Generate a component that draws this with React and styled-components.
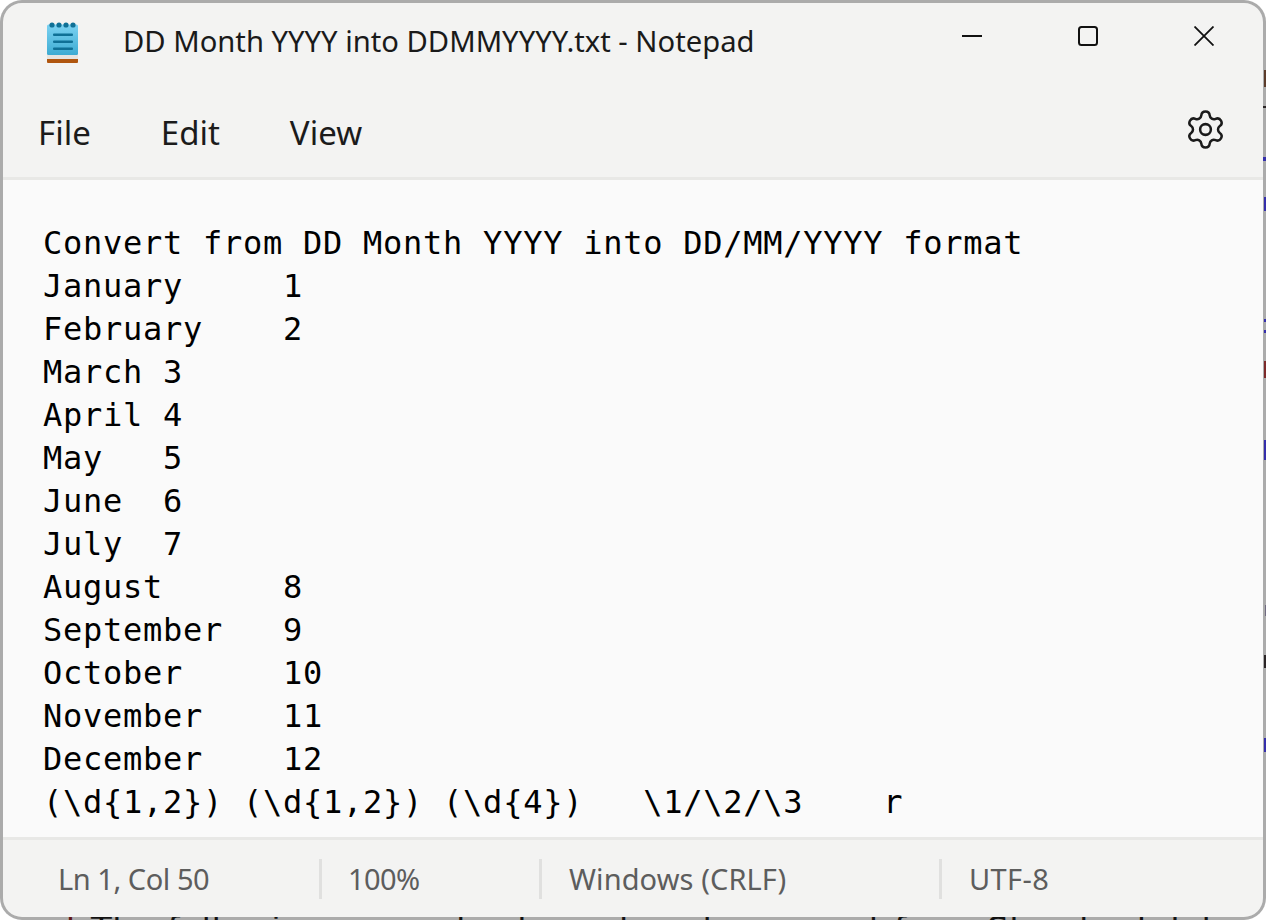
import React from 'react';
import styled, { createGlobalStyle } from 'styled-components';
import { Settings } from 'lucide-react';

const GlobalStyle = createGlobalStyle`
  html, body {
    margin: 0;
    height: 100%;
    overflow: hidden;
    background: #fff;
  }
`

const UI_FONT = `"Noto Sans", "Open Sans", sans-serif`;

const Desktop = styled.div`
  position: relative;
  width: 1266px;
  height: 920px;
  overflow: hidden;
`

// the document behind the window, only slivers of it show through the frame
const BehindText = styled.div`
  position: absolute;
  left: ${p => p.$left}px;
  top: 909px;
  color: ${p => p.$color};
  font: 34px/40px "DejaVu Sans", sans-serif;
  letter-spacing: 0.6px;
  white-space: pre;
`

const BehindMark = styled.span`
  position: absolute;
  left: ${p => p.$left}px;
  top: ${p => p.$top}px;
  width: ${p => 1266 - p.$left}px;
  height: ${p => p.$height}px;
  background: ${p => p.$color};
`

const Window = styled.div`
  position: absolute;
  inset: 0;
  box-sizing: border-box;
  display: flex;
  flex-direction: column;
  border: 3px solid rgba(0, 0, 0, 0.33);
  border-radius: 22px;
  background: #f3f3f2;
  background-clip: padding-box;
  overflow: hidden;
`

const TitleBar = styled.div`
  height: 77px;
  flex: none;
  display: flex;
  align-items: center;
  padding-left: 44px;
`

const AppIcon = styled.svg`
  width: 32px;
  height: 41px;
  flex: none;
  margin-top: 2px;
`

const Title = styled.div`
  margin-left: 44px;
  margin-bottom: 1px;
  font-family: ${UI_FONT};
  font-size: 29.2px;
  color: #1a1a1a;
  white-space: pre;
`

const Controls = styled.div`
  margin-left: auto;
  margin-right: 1px;
  margin-bottom: 11px;
  display: flex;
  align-items: center;
`

const ControlButton = styled.div`
  width: ${p => p.$width}px;
  display: flex;
  justify-content: center;
  svg { display: block; }
`

const MenuBar = styled.div`
  height: 100px;
  flex: none;
  box-sizing: border-box;
  border-bottom: 3px solid #e8e8e6;
  display: flex;
  align-items: center;
  padding: 7px 36px 0 35px;
  gap: 70px;
`

const MenuItem = styled.div`
  font-family: ${UI_FONT};
  font-size: 33px;
  color: #1b1b1b;
`

const GearButton = styled.div`
  margin-left: auto;
  margin-top: -6px;
  display: flex;
  svg { display: block; }
`

const Editor = styled.pre`
  flex: 1;
  margin: 0;
  padding: 42px 0 0 40px;
  background: #fafafa;
  color: #000;
  font-family: "DejaVu Sans Mono", monospace;
  font-size: 32px;
  letter-spacing: 0.74px;
  line-height: 43px;
  tab-size: 6;
  overflow: hidden;
`

const StatusBar = styled.div`
  height: 80px;
  flex: none;
  box-sizing: border-box;
  border-top: 3px solid #e8e8e6;
  display: flex;
  align-items: center;
`

const StatusCell = styled.div`
  width: ${p => p.$width}px;
  height: 40px;
  box-sizing: border-box;
  display: flex;
  align-items: center;
  padding-left: ${p => p.$pad}px;
  border-left: ${p => (p.$first ? 'none' : '3px solid #e0e0df')};
  font-family: ${UI_FONT};
  font-size: 29px;
  letter-spacing: ${p => p.$tracking || 0}px;
  color: #5d5d5d;
  white-space: pre;
`

const NOTE = `Convert from DD Month YYYY into DD/MM/YYYY format
January\t1
February\t2
March\t3
April\t4
May\t5
June\t6
July\t7
August\t8
September\t9
October\t10
November\t11
December\t12
(\\d{1,2}) (\\d{1,2}) (\\d{4})\t\\1/\\2/\\3\tr`;

const BLUE = '#5046ff';
const MARKS = [
  { left: 1264, top: 70, height: 17, color: '#8a5a40' },
  { left: 1263, top: 106, height: 2, color: '#40383a' },
  { left: 1263, top: 157, height: 4, color: BLUE },
  { left: 1264, top: 197, height: 14, color: BLUE },
  { left: 1264, top: 319, height: 3, color: BLUE },
  { left: 1264, top: 330, height: 3, color: BLUE },
  { left: 1264, top: 361, height: 17, color: '#bb3f3f' },
  { left: 1264, top: 440, height: 20, color: BLUE },
  { left: 1265, top: 605, height: 11, color: '#a8a0c0' },
  { left: 1264, top: 655, height: 13, color: '#40383a' },
  { left: 1264, top: 738, height: 14, color: BLUE },
];

const NotepadIcon = () => (
  <AppIcon viewBox="0 0 32 41">
    <defs>
      <linearGradient id="page" x1="0" y1="0" x2="0" y2="1">
        <stop offset="0" stopColor="#7cd2f2" />
        <stop offset="1" stopColor="#3dabd2" />
      </linearGradient>
    </defs>
    <rect x="0" y="36" width="31" height="5" fill="#b0560f" rx="1" />
    <rect x="0" y="32" width="31" height="5" fill="#e6e4e0" />
    <rect x="0" y="2.5" width="31" height="30.5" rx="1.5" fill="url(#page)" />
    {[5, 12, 19, 26].map(x => (
      <circle key={x} cx={x} cy="3" r="2.6" fill="#0f7096" />
    ))}
    {[11.5, 18.5, 25.5].map(y => (
      <rect key={y} x="6" y={y} width="20" height="2.5" rx="1" fill="#0f7096" />
    ))}
  </AppIcon>
);

const App = () => (
  <Desktop>
    <GlobalStyle />
    <BehindText $left={32} $color="#8c2323">ad</BehindText>
    <BehindText $left={91} $color="#1c1c1c">The following example shows how to convert from Standard date</BehindText>
    {MARKS.map(m => (
      <BehindMark key={m.top} $left={m.left} $top={m.top} $height={m.height} $color={m.color} />
    ))}
    <Window>
      <TitleBar>
        <NotepadIcon />
        <Title>DD Month YYYY into DDMMYYYY.txt - Notepad</Title>
        <Controls>
          <ControlButton $width={116}>
            <svg width="20" height="20" viewBox="0 0 20 20">
              <path d="M0 10h20" stroke="#111" strokeWidth="2" />
            </svg>
          </ControlButton>
          <ControlButton $width={116}>
            <svg width="20" height="20" viewBox="0 0 20 20">
              <rect x="1" y="1" width="18" height="18" rx="2.5" fill="none" stroke="#111" strokeWidth="2" />
            </svg>
          </ControlButton>
          <ControlButton $width={116}>
            <svg width="20" height="20" viewBox="0 0 20 20">
              <path d="M0.5 0.5l19 19M19.5 0.5L0.5 19.5" stroke="#111" strokeWidth="1.8" />
            </svg>
          </ControlButton>
        </Controls>
      </TitleBar>
      <MenuBar>
        <MenuItem>File</MenuItem>
        <MenuItem>Edit</MenuItem>
        <MenuItem>View</MenuItem>
        <GearButton>
          <Settings size={43} strokeWidth={1.4} color="#1b1b1b" />
        </GearButton>
      </MenuBar>
      <Editor>{NOTE}</Editor>
      <StatusBar>
        <StatusCell $first $width={316} $pad={55} $tracking={-0.45}>Ln 1, Col 50</StatusCell>
        <StatusCell $width={220} $pad={26} $tracking={-0.6}>100%</StatusCell>
        <StatusCell $width={400} $pad={27} $tracking={0.1}>Windows (CRLF)</StatusCell>
        <StatusCell $width={200} $pad={27} $tracking={0.4}>UTF-8</StatusCell>
      </StatusBar>
    </Window>
  </Desktop>
);

export default App;
